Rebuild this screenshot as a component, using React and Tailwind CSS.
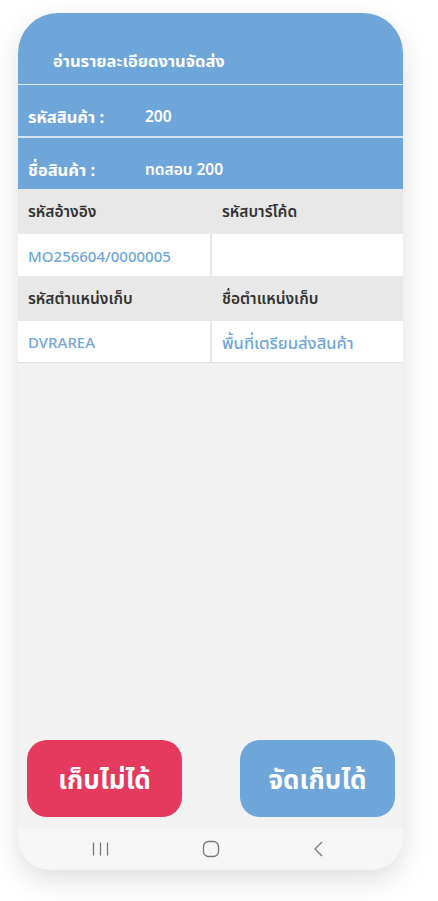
import React from 'react';

// ── Theme values ─────────────────────────────────────────────────────────────
const FONT = { fontFamily: '"Noto Sans Thai", "Noto Sans", "DejaVu Sans", sans-serif' };

const LABEL_CLS = 'text-[15.5px] font-semibold text-[#333333] leading-6';
const VALUE_CLS = 'text-[15px] font-medium text-[#6fa6d9] leading-6';

// ─────────────────────────────────────────────────────────────────────────────

const InfoRow = ({ label, value }) => (
  <div className="flex h-[51px] items-start pt-[21px] px-[10px] bg-[#6fa6d9]">
    <span className="w-[117px] text-[16.5px] font-bold text-white leading-6">{label}</span>
    <span className="text-[15.5px] font-semibold text-white leading-6">{value}</span>
  </div>
);

const NavBar = () => (
  <div className="h-[42px] bg-[#f6f6f6] flex items-center justify-between pl-[74px] pr-[79px]">
    <svg width="17" height="16" viewBox="0 0 17 16" fill="none" stroke="#777" strokeWidth="1.3">
      <path d="M1.5 1.5v13M8.5 1.5v13M15.5 1.5v13" />
    </svg>
    <svg width="18" height="18" viewBox="0 0 18 18" fill="none" stroke="#777" strokeWidth="1.3">
      <rect x="1.5" y="1.5" width="15" height="15" rx="5" />
    </svg>
    <svg width="12" height="18" viewBox="0 0 12 18" fill="none" stroke="#777" strokeWidth="1.3">
      <path d="M10 2L3 9l7 7" />
    </svg>
  </div>
);

const App = () => {
  return (
    <div className="min-h-screen w-full bg-white pt-[13px] pl-[18px]" style={FONT}>
      <div className="w-[385px] h-[857px] rounded-t-[40px] rounded-b-[32px] overflow-hidden bg-[#f2f2f2] flex flex-col shadow-[0_10px_28px_rgba(0,0,0,0.13)]">

        {/* Header */}
        <div className="h-[71px] bg-[#6fa6d9] pt-[37px] pl-[35px]">
          <h1 className="text-[16.5px] font-bold text-white leading-6">อ่านรายละเอียดงานจัดส่ง</h1>
        </div>
        <div className="h-px bg-[#dfeaf5]" />
        <InfoRow label="รหัสสินค้า :" value="200" />
        <div className="h-[2px] bg-[#d4e3f2]" />
        <InfoRow label="ชื่อสินค้า :" value="ทดสอบ 200" />

        {/* Detail table */}
        <div className="grid grid-cols-[192px_191px] gap-x-[2px] bg-[#e8e8e8] shadow-[0_1px_1px_rgba(0,0,0,0.08)]">
          <div className="h-[45px] flex items-center pt-[2px] px-[10px]"><span className={LABEL_CLS}>รหัสอ้างอิง</span></div>
          <div className="h-[45px] flex items-center pt-[2px] px-[10px]"><span className={LABEL_CLS}>รหัสบาร์โค้ด</span></div>
          <div className="h-[42px] flex items-center pt-[5px] px-[10px] bg-white"><span className={VALUE_CLS}>MO256604/0000005</span></div>
          <div className="h-[42px] flex items-center px-[10px] bg-white" />
          <div className="h-[45px] flex items-center pt-[2px] px-[10px]"><span className={LABEL_CLS}>รหัสตำแหน่งเก็บ</span></div>
          <div className="h-[45px] flex items-center pt-[2px] px-[10px]"><span className={LABEL_CLS}>ชื่อตำแหน่งเก็บ</span></div>
          <div className="h-[41px] flex items-center pt-[4px] px-[10px] bg-white"><span className={VALUE_CLS}>DVRAREA</span></div>
          <div className="h-[41px] flex items-center pt-[4px] px-[10px] bg-white"><span className={`${VALUE_CLS} text-[16.5px]`}>พื้นที่เตรียมส่งสินค้า</span></div>
        </div>

        <div className="flex-1" />

        {/* Actions */}
        <div className="flex justify-between pl-[9px] pr-[8px] pb-[11px]">
          <button
            type="button"
            className="w-[155px] h-[77px] rounded-[20px] bg-[#e5395e] text-white text-[26px] font-bold pt-[5px]"
          >
            เก็บไม่ได้
          </button>
          <button
            type="button"
            className="w-[155px] h-[77px] rounded-[20px] bg-[#6fa6d9] text-white text-[26px] font-bold pt-[5px]"
          >
            จัดเก็บได้
          </button>
        </div>

        <NavBar />
      </div>
    </div>
  );
};

export default App;
